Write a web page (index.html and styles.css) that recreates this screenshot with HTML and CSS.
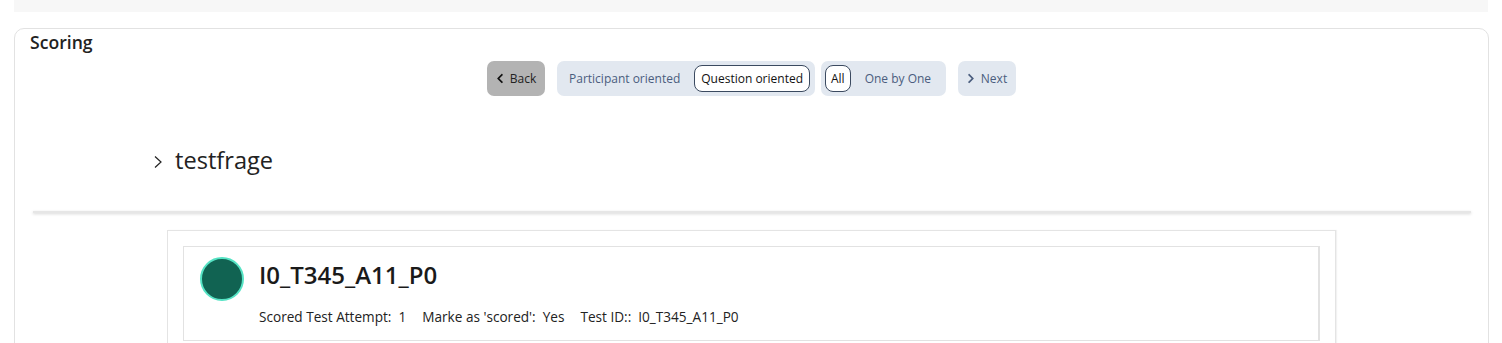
FILE: index.html
```html
<!DOCTYPE html>
<html>
<head>
<meta charset="utf-8">
<link rel="stylesheet" href="styles.css">
</head>
<body>
<div class="topbar"></div>
<div class="card">
  <div class="card-title">Scoring</div>
  <div class="toolbar">
    <button class="btn btn-back"><svg class="chev" viewBox="0 0 320 512"><path d="M34.5 239L228.9 44.7c9.4-9.4 24.6-9.4 33.9 0l22.7 22.7c9.4 9.4 9.4 24.5 0 33.9L131.5 256l154 154.8c9.3 9.4 9.3 24.5 0 33.9l-22.7 22.7c-9.4 9.4-24.6 9.4-33.9 0L34.5 273c-9.4-9.4-9.4-24.6 0-34z"/></svg>Back</button>
    <div class="seg seg-1">
      <span class="seg-item">Participant oriented</span>
      <span class="seg-item active">Question oriented</span>
    </div>
    <div class="seg seg-2">
      <span class="seg-item active">All</span>
      <span class="seg-item">One by One</span>
    </div>
    <button class="btn btn-next"><svg class="chev" viewBox="0 0 320 512"><path d="M285.5 273L91.1 467.3c-9.4 9.4-24.6 9.4-33.9 0l-22.7-22.7c-9.4-9.4-9.4-24.5 0-33.9L188.5 256 34.5 101.3c-9.3-9.4-9.3-24.5 0-33.9l22.7-22.7c9.4-9.4 24.6-9.4 33.9 0L285.5 239c9.4 9.4 9.4 24.6 0 34z"/></svg>Next</button>
  </div>
  <div class="question-head">
    <svg class="q-chev" viewBox="0 0 10 14"><path d="M2 1.5 L8 7 L2 12.5" fill="none" stroke="#222" stroke-width="1.2"/></svg>
    <span class="q-title">testfrage</span>
  </div>
  <div class="outer-box">
    <div class="inner-box">
      <div class="p-row">
        <div class="avatar"></div>
        <div class="p-info">
          <div class="p-name">I0_T345_A11_P0</div>
          <div class="p-meta">
            <span class="meta-item">Scored Test Attempt:&nbsp; 1</span>
            <span class="meta-item">Marke as 'scored':&nbsp; Yes</span>
            <span class="meta-item">Test ID::&nbsp; I0_T345_A11_P0</span>
          </div>
        </div>
      </div>
    </div>
  </div>
</div>
</body>
</html>
```
FILE: styles.css
```css
* { box-sizing: border-box; }
html, body { margin: 0; padding: 0; background: #ffffff; }
body {
  font-family: "Open Sans", "Noto Sans", "Liberation Sans", sans-serif;
  color: #222;
  overflow: hidden;
  height: 343px;
}
.topbar {
  height: 12px;
  margin: 0 14px 0 14px;
  background: #f7f7f7;
}
.card {
  margin: 16px 13px 0 14px;
  border: 1px solid #e2e2e2;
  border-radius: 10px;
  height: 400px;
  padding: 0;
}
.card-title {
  font-size: 17.6px;
  font-weight: 600;
  line-height: 24px;
  padding: 1px 0 0 15px;
  color: #222;
}
.toolbar {
  display: flex;
  justify-content: center;
  align-items: center;
  margin-top: 7px;
}
.btn {
  border: none;
  height: 35px;
  width: 58px;
  border-radius: 7px;
  font-family: inherit;
  font-size: 12px;
  display: flex;
  align-items: center;
  justify-content: center;
  gap: 6px;
  padding: 0;
}
.chev { width: 8px; height: 11px; }
.btn-back { background: #b3b3b3; color: #222; }
.btn-back .chev { fill: #111; }
.btn-next { background: #e2e8f0; color: #4a5d7e; margin-left: 12px; }
.btn-next .chev { fill: #4a5d7e; }
.seg {
  display: flex;
  align-items: center;
  height: 35px;
  background: #e2e8f0;
  border-radius: 7px;
  padding: 0 4px;
}
.seg-1 { margin-left: 12px; width: 258px; }
.seg-2 { margin-left: 6px; width: 125px; }
.seg-item {
  font-size: 12px;
  color: #4a5d7e;
  height: 27px;
  line-height: 25px;
  padding: 0 7px;
  border: 1px solid transparent;
  border-radius: 8px;
  white-space: nowrap;
}
.seg-1 .seg-item:first-child { margin-right: 6px; }
.seg-1 .seg-item.active { padding: 0 6px; }
.seg-2 .seg-item.active { margin-right: 6px; padding: 0 5px; }
.seg-item.active {
  background: #ffffff;
  color: #111;
  border-color: #3b4a60;
}
.question-head {
  position: relative;
  display: flex;
  align-items: center;
  margin: 0 17px 0 18px;
  padding: 48px 0 36px 120px;
}
.question-head::after {
  content: "";
  position: absolute;
  left: 0;
  right: 0;
  bottom: -1px;
  height: 2px;
  background: #e6e6e6;
  box-shadow: 0 1px 3px rgba(0, 0, 0, 0.18);
}
.q-chev { width: 10px; height: 14px; margin-right: 12px; margin-top: 3px; }
.q-title { font-size: 23.6px; line-height: 32px; color: #222; }
.outer-box {
  width: 1169px;
  margin: 18px auto 0;
  border: 1px solid #e4e4e4;
  box-shadow: 1px 0 1px rgba(0,0,0,0.05);
  padding: 15px 15px 0 15px;
  height: 200px;
}
.inner-box {
  border: 1px solid #e2e2e2;
  border-right-width: 2px;
  padding: 10px 16px 0 16px;
  height: 95px;
}
.p-row { display: flex; align-items: flex-start; }
.avatar {
  width: 44px;
  height: 44px;
  border-radius: 50%;
  background: #116352;
  border: 2px solid #55e3c4;
  flex: none;
}
.p-info { margin-left: 15px; }
.p-name {
  font-size: 24px;
  font-weight: 600;
  line-height: 30px;
  margin-top: 3px;
  color: #1a1a1a;
}
.p-meta {
  font-size: 13.6px;
  margin-top: 17px;
  color: #222;
  display: flex;
  gap: 16px;
}
```
